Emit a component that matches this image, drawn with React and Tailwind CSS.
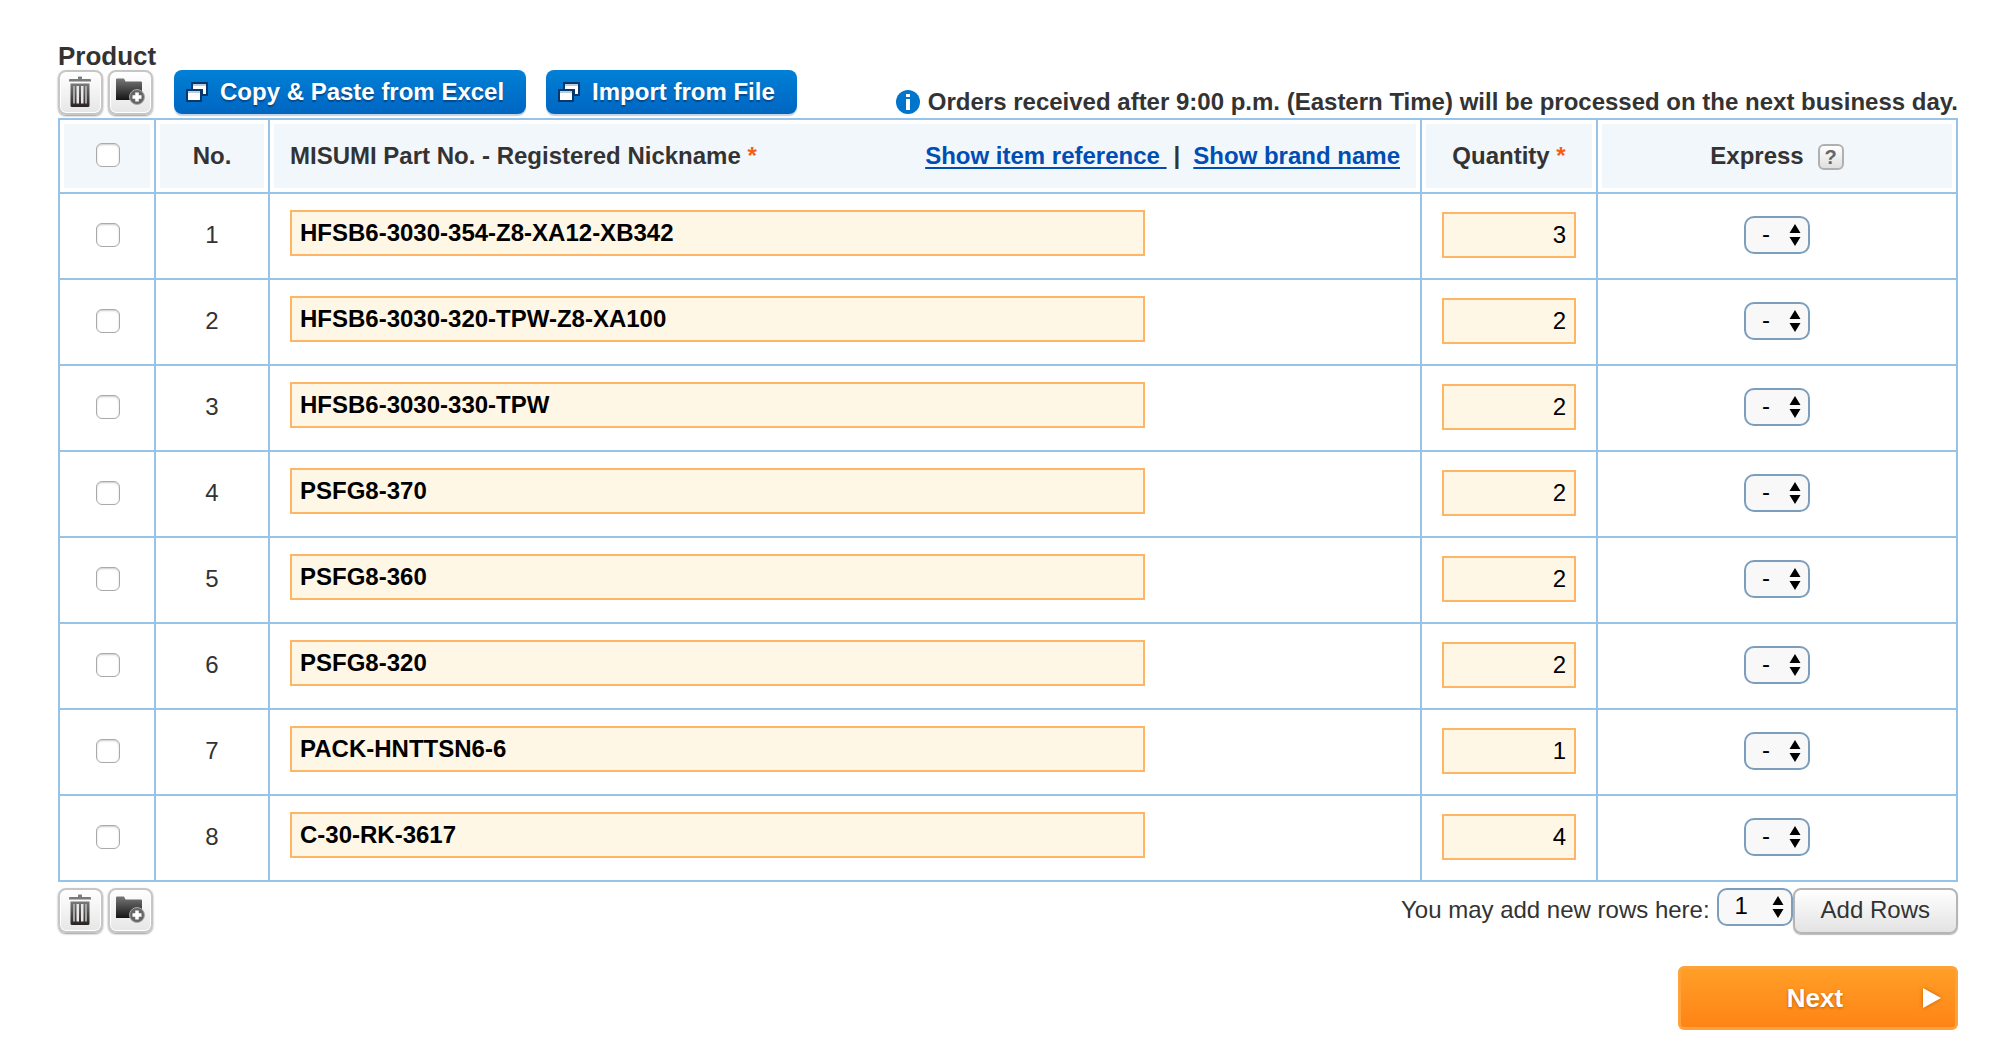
import React from "react";

const rows = [
  ["HFSB6-3030-354-Z8-XA12-XB342", 3],
  ["HFSB6-3030-320-TPW-Z8-XA100", 2],
  ["HFSB6-3030-330-TPW", 2],
  ["PSFG8-370", 2],
  ["PSFG8-360", 2],
  ["PSFG8-320", 2],
  ["PACK-HNTTSN6-6", 1],
  ["C-30-RK-3617", 4],
];

function TrashIcon() {
  return (
    <svg viewBox="0 0 22 32" className="h-8 w-[22px]" aria-hidden="true">
      <defs>
        <linearGradient id="trash" x1="0" y1="0" x2="0" y2="1">
          <stop offset="0" stopColor="#7a7a7a" />
          <stop offset="1" stopColor="#2a2222" />
        </linearGradient>
      </defs>
      <path d="M9 3V1.500a1 1 0 0 1 1-1h2a1 1 0 0 1 1 1V3h8a1 1 0 0 1 1 1v1.500H0V4a1 1 0 0 1 1-1z" fill="#7a7a7a" />
      <path d="M1.500 7.500h19v22a1.500 1.500 0 0 1-1.500 1.500H3a1.500 1.500 0 0 1-1.500-1.500z" fill="url(#trash)" />
      <path d="M4 10h2v17.500H4zM16 10h2v17.500h-2z" fill="#a8a8a8" />
      <path d="M7.500 10H10v17.500H7.500zM12 10h2.500v17.500H12z" fill="#e8e8e8" />
    </svg>
  );
}

function FolderIcon() {
  return (
    <svg viewBox="0 0 30 28" className="h-7 w-[30px]" aria-hidden="true">
      <defs>
        <linearGradient id="folder" x1="0" y1="0" x2="0" y2="1">
          <stop offset="0" stopColor="#777" />
          <stop offset="1" stopColor="#151515" />
        </linearGradient>
      </defs>
      <path d="M1 1.500a1 1 0 0 1 1-1h7l1.500 3H26a1 1 0 0 1 1 1V22H1z" fill="url(#folder)" />
      <circle cx="22" cy="19" r="7.500" fill="#666" stroke="#aaa" strokeWidth="1" />
      <path d="M22 14.500v9M17.500 19h9" stroke="#fff" strokeWidth="3.500" />
    </svg>
  );
}

function WindowsIcon() {
  return (
    <svg viewBox="0 0 22 20" className="h-5 w-[22px] shrink-0" aria-hidden="true">
      <path d="M5 0h17v14H5z" fill="#07376b" />
      <path d="M7 2h13v3H7z" fill="#b9cde2" />
      <path d="M7 4h13v8h-3V7H7z" fill="#fff" />
      <path d="M0 7h16v13H0z" fill="#07376b" />
      <path d="M2 9h12v2.500H2z" fill="#b9cde2" />
      <path d="M2 11h12v7H2z" fill="#fff" />
    </svg>
  );
}

function IconButton({ label, children }) {
  return (
    <button
      type="button"
      aria-label={label}
      className="flex size-[45px] items-center justify-center rounded-lg border-2 border-[#c6c6c6] bg-linear-to-b from-white to-[#e6e6e6] pr-0.5 pb-0.5 shadow-[0_1px_2px_#999] ring-1 ring-white ring-inset"
    >
      {children}
    </button>
  );
}

function RowActions() {
  return (
    <div className="flex gap-[5px]">
      <IconButton label="Delete rows"><TrashIcon /></IconButton>
      <IconButton label="Add to folder"><FolderIcon /></IconButton>
    </div>
  );
}

function BlueButton({ children }) {
  return (
    <button
      type="button"
      className="flex h-11 items-center gap-3 rounded-lg bg-linear-to-b from-[#0080d6] to-[#0066c2] pr-[22px] pl-3 text-2xl font-bold whitespace-nowrap text-white shadow-[0_2px_1px_#c9d3dd] text-shadow-[0_2px_1px_#064a8a]"
    >
      <WindowsIcon />
      {children}
    </button>
  );
}

function Picker({ label, options, wide }) {
  return (
    <span className="relative inline-flex align-middle">
      <select
        aria-label={label}
        className={
          (wide ? "w-19 pl-4" : "w-[66px] pl-4") +
          " h-[38px] appearance-none rounded-[10px] border-2 border-[#7b9ebd] bg-[#f8f8f8] pb-0.5 text-2xl leading-8 text-black"
        }
      >
        {options.map((o) => <option key={o}>{o}</option>)}
      </select>
      <svg viewBox="0 0 12 22" className="pointer-events-none absolute top-2 right-[9px] h-[22px] w-3" aria-hidden="true">
        <path d="M6 0l5.500 9H.5zM6 22L.5 13h11z" fill="#000" />
      </svg>
    </span>
  );
}

function Check({ label }) {
  return (
    <input
      type="checkbox"
      aria-label={label}
      className="mx-auto block size-6 appearance-none rounded-md border border-[#aaa] bg-white shadow-[inset_0_1px_2px_#ccc] checked:bg-blue-500"
    />
  );
}

function HeadCell({ className = "justify-center", children }) {
  return (
    <th scope="col" className="border-2 border-[#97c3e8] p-1 font-bold">
      <div className={"flex h-16 items-center bg-[#f2f7fc] " + className}>{children}</div>
    </th>
  );
}

const cell = "h-[86px] border-2 border-[#97c3e8] pb-0.5";
const field = "block h-[46px] border-2 border-[#ffb566] bg-[#fff7e6] px-2 text-2xl text-black";
const link = "whitespace-pre text-[#004db3] underline decoration-2 underline-offset-3";

export default function App() {
  return (
    <main className="bg-white pt-[42px] pr-[38px] pb-7 pl-[58px] font-['Liberation_Sans',Arial,sans-serif] text-2xl text-[#333]">
      <h1 className="text-[26px] leading-7 font-bold">Product</h1>
      <div className="flex h-12 items-start">
        <RowActions />
        <div className="ml-[21px] flex gap-5">
          <BlueButton>Copy &amp; Paste from Excel</BlueButton>
          <BlueButton>Import from File</BlueButton>
        </div>
        <p className="mt-4 ml-auto flex items-center gap-2 font-bold whitespace-nowrap">
          <svg viewBox="0 0 24 24" className="size-6" aria-hidden="true">
            <circle cx="12" cy="12" r="12" fill="#0075cc" />
            <path d="M10 4h4v3h-4zM10 9h4v11h-4z" fill="#fff" />
          </svg>
          Orders received after 9:00 p.m. (Eastern Time) will be processed on the next business day.
        </p>
      </div>

      <table className="w-full table-fixed border-collapse">
        <colgroup>
          <col className="w-24" />
          <col className="w-[114px]" />
          <col />
          <col className="w-44" />
          <col className="w-[360px]" />
        </colgroup>
        <thead>
          <tr>
            <HeadCell className="justify-center pb-0.5 pl-0.5"><Check label="Select all rows" /></HeadCell>
            <HeadCell>No.</HeadCell>
            <HeadCell className="justify-between px-4">
              <span>MISUMI Part No. - Registered Nickname <span className="text-[#f26014]">*</span></span>
              <span className="flex gap-[7px]">
                <a href="#reference" className={link}>{"Show item reference "}</a>
                <span>|</span>
                <a href="#brand" className={link + " ml-1.5"}>Show brand name</a>
              </span>
            </HeadCell>
            <HeadCell><span>Quantity <span className="text-[#f26014]">*</span></span></HeadCell>
            <HeadCell className="justify-center gap-[14px]">
              Express
              <button
                type="button"
                aria-label="About express"
                className="mt-0.5 flex size-[26px] items-center justify-center rounded-md border-2 border-[#b0b0b0] bg-linear-to-b from-white to-[#e0e0e0] text-xl leading-5 font-bold text-[#666]"
              >
                ?
              </button>
            </HeadCell>
          </tr>
        </thead>
        <tbody>
          {rows.map(([part, qty], i) => (
            <tr key={part}>
              <td className={cell + " pl-0.5"}><Check label={"Select row " + (i + 1)} /></td>
              <td className={cell + " text-center"}>{i + 1}</td>
              <td className="h-[86px] border-2 border-[#97c3e8] px-5 pb-1.5">
                <input type="text" aria-label={"Part number " + (i + 1)} defaultValue={part} className={field + " w-[77%] font-bold"} />
              </td>
              <td className={cell + " px-5"}>
                <input type="text" aria-label={"Quantity " + (i + 1)} defaultValue={qty} className={field + " w-full text-right"} />
              </td>
              <td className={cell + " text-center leading-none"}>
                <Picker label={"Express " + (i + 1)} options={["-", "A"]} />
              </td>
            </tr>
          ))}
        </tbody>
      </table>

      <div className="mt-1.5 flex items-start justify-between">
        <RowActions />
        <div className="flex items-start">
          <span className="mt-1.5 mr-[7px]">You may add new rows here:</span>
          <Picker label="Number of rows to add" options={["1", "5", "10"]} wide />
          <button
            type="button"
            className="h-[46px] rounded-lg border-2 border-[#b5b5b5] bg-linear-to-b from-white to-[#e3e3e3] px-[26px] pb-0.5 whitespace-nowrap shadow-[0_1px_1px_#bbb]"
          >
            Add Rows
          </button>
        </div>
      </div>

      <div className="mt-8 flex justify-end">
        <button
          type="button"
          className="grid h-16 w-[280px] grid-cols-[1fr_auto_1fr] items-center rounded-md border-3 border-[#ffa23a] bg-linear-to-b from-[#ff9f26] to-[#ff8316] pr-[14px] pl-2 text-[26px] font-bold text-white text-shadow-[0_1px_3px_#b85c00]"
        >
          <span className="col-start-2">Next</span>
          <svg viewBox="0 0 18 20" className="h-5 w-[18px] justify-self-end drop-shadow-[0_0_2px_#c86400]" aria-hidden="true">
            <path d="M0 0l18 10L0 20z" fill="#fff" />
          </svg>
        </button>
      </div>
    </main>
  );
}
